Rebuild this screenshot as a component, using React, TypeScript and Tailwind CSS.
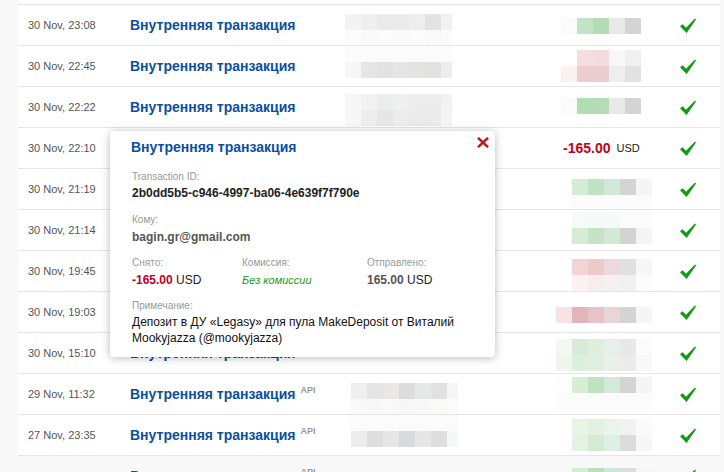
import React from 'react';

type Blur = { top: number; left: number; cells: string[][] };

interface Row {
  date: string;
  api?: boolean;
  addr?: Blur;
  addrText?: string;
  amount?: Blur;
  amountText?: string;
  last?: boolean;
}

const W = '#fbfbfb';

const rows: Row[] = [
  {
    date: '30 Nov, 23:08',
    addr: {
      top: 9,
      left: 0,
      cells: [
        ['#f3f3f3', '#efefee', '#e9eaea', '#ebebeb', '#efeeed', '#e3e3e3', '#f0f1f3'],
        ['#fcfcfc', '#fafafa', '#fbfbfb', '#fafafa', '#fbfbfb', '#f9f9f9', '#fbfbfb'],
      ],
    },
    amount: { top: 13, left: 5, cells: [['#fbfcfa', '#c4e3c4', '#b4dcb4', '#e8e9e8', '#d4d4d4']] },
  },
  {
    date: '30 Nov, 22:45',
    addr: {
      top: 0,
      left: 0,
      cells: [
        [W, W, W, W, W, W, W],
        ['#f6f6f6', '#e6e6e5', '#e1e3e3', '#e6e6e6', '#e3e3e2', '#e1e1e0', '#ecedef'],
      ],
    },
    amount: {
      top: 4,
      left: 5,
      cells: [
        ['#ffffff', '#f3dfe0', '#f3dce0', '#f8f8f8', '#f0f0f0'],
        ['#fcf0f0', '#ebcdd2', '#ecced2', '#eeeeee', '#e0e1e0'],
      ],
    },
  },
  {
    date: '30 Nov, 22:22',
    addr: {
      top: 7,
      left: 0,
      cells: [
        ['#f7f7f7', '#f3f2f1', '#ebeced', '#eef0ef', '#ececec', '#ececec', '#f1f2f4'],
        ['#f7f7f7', '#ededed', '#e6e6e6', '#ececec', '#eaeaea', '#ebebeb', '#f4f4f4'],
      ],
    },
    amount: { top: 11, left: 5, cells: [['#fbfcf8', '#b2dcb2', '#b6dcb6', '#e8e9e8', '#d4d4d4']] },
  },
  { date: '30 Nov, 22:10', amountText: '-165.00' },
  {
    date: '30 Nov, 21:19',
    amount: {
      top: 10,
      left: 16,
      cells: [
        ['#d4ebd4', '#c2e3c2', '#d2e8d9', '#d4d4d4', '#f4f5f4'],
        [W, W, W, W, W],
      ],
    },
  },
  {
    date: '30 Nov, 21:14',
    amount: {
      top: 2,
      left: 16,
      cells: [
        ['#f7fbf7', '#f5faf5', '#f6faf6', W, W],
        ['#d7ecd7', '#c5e4c5', '#d4e8d8', '#d3d3d3', '#f4f5f4'],
      ],
    },
  },
  {
    date: '30 Nov, 19:45',
    amount: {
      top: 8,
      left: 16,
      cells: [
        ['#f2d3d8', '#eccaca', '#edd9dd', '#e0e0e0', '#f7f7f7'],
        ['#faf2f3', '#f7ecee', '#f6f0f1', '#f0f0f0', W],
      ],
    },
  },
  {
    date: '30 Nov, 19:03',
    amount: {
      top: 15,
      left: 0,
      cells: [['#f6e4e4', '#e4b4bb', '#e8c2c6', '#e7d5d8', '#d4d4d4', '#f4f5f4']],
    },
  },
  {
    date: '30 Nov, 15:10',
    addrText: '31010101002',
    amount: {
      top: 6,
      left: 0,
      cells: [
        ['#f3f8f3', '#d8ebd8', '#deefde', '#e6f0ea', '#e8e8e8', W],
        ['#eef6ee', '#ddefdd', '#e0f0e0', '#e8f0e8', '#ebebeb', '#f8f8f8'],
      ],
    },
  },
  {
    date: '29 Nov, 11:32',
    api: true,
    addr: {
      top: 9,
      left: 6,
      cells: [
        ['#efefef', '#e5e5e5', '#e9e8e6', '#dcdcdc', '#e6e8e8', '#e1e1df', '#f5f6f8'],
        ['#f9f9f9', '#f8f8f8', '#f9f9f9', '#f7f7f7', '#f8f8f8', '#f9f9f8', '#fbfbfb'],
      ],
    },
    amount: {
      top: 3,
      left: 0,
      cells: [
        ['#fdfdfd', '#d8ecd6', '#c1e2c1', '#d4e9db', '#d4d4d4', '#f4f5f4'],
        [W, W, W, W, W, W],
      ],
    },
  },
  {
    date: '27 Nov, 23:35',
    api: true,
    addr: {
      top: 0,
      left: 6,
      cells: [
        [W, W, W, W, W, W, W],
        ['#ececec', '#dedede', '#e7e6e4', '#d9dadc', '#e6e6e6', '#dfdedc', '#f6f7f9'],
      ],
    },
    amount: {
      top: 4,
      left: 16,
      cells: [
        ['#e8f4e8', '#e3f1e3', '#eaf5ea', '#f3f2f2', '#fafafa'],
        ['#e3f2e3', '#d2ebd2', '#deefe4', '#dcdcdc', '#f6f7f6'],
      ],
    },
  },
  {
    date: '',
    api: true,
    last: true,
    amount: { top: 12, left: 16, cells: [['#d4ebd4', '#b9dfb9', '#cfe7d6', '#dcdcdc', '#f4f5f4']] },
  },
];

const Blocks = ({ b, narrowLast }: { b: Blur; narrowLast?: boolean }) => (
  <div style={{ paddingTop: b.top, paddingLeft: b.left }}>
    {b.cells.map((r, i) => (
      <div key={i} className="flex h-[16px]">
        {r.map((c, j) => (
          <div
            key={j}
            className={narrowLast && j === r.length - 1 ? 'h-[16px] w-[11px]' : 'h-[16px] w-[16px]'}
            style={{ backgroundColor: c }}
          />
        ))}
      </div>
    ))}
  </div>
);

const Check = () => (
  <svg width="16" height="15" viewBox="0 0 16 15">
    <path d="M0 8.3 L2.6 6.3 L6 9.8 L15 0.4 L16 1.4 L6.6 15 Z" fill="#129a12" />
  </svg>
);

const Title = () => (
  <span className="text-[14px] font-bold leading-[16px] text-[#0b4f9e]">Внутренняя транзакция</span>
);

function TxRow({ row }: { row: Row }) {
  return (
    <div className={`flex h-[41px] shrink-0 border-t border-[#e6e6e6] ${row.last ? 'bg-[#f8f8f8]' : ''}`}>
      <div className="flex w-[112px] items-center pl-[10px] text-[11px] text-[#555]">{row.date}</div>
      <div className="flex w-[215px] items-center">
        <Title />
        {row.api && <sup className="ml-[5px] text-[9px] font-bold text-[#999]">API</sup>}
      </div>
      <div className="w-[211px]">
        {row.addr && <Blocks b={row.addr} narrowLast />}
        {row.addrText && (
          <div className="flex h-full items-center pl-[15px] text-[12px] text-[#555]">{row.addrText}</div>
        )}
      </div>
      <div className="w-[109px]">
        {row.amount && <Blocks b={row.amount} />}
        {row.amountText && (
          <div className="flex h-full items-center gap-[6px] pl-[7px]">
            <span className="text-[14px] font-bold text-[#c0001e]">{row.amountText}</span>
            <span className="text-[11px] text-[#222]">USD</span>
          </div>
        )}
      </div>
      <div className="flex items-center pl-[15px]">
        <Check />
      </div>
    </div>
  );
}

function Popup() {
  return (
    <div className="absolute left-[110px] top-[131px] h-[226px] w-[385px] rounded-[4px] bg-white shadow-[0_1px_9px_rgba(0,0,0,0.28)]">
      <button className="absolute right-[6px] top-[6px]">
        <svg width="12" height="11" viewBox="0 0 12 11">
          <path d="M1 0.8 L11 10.2 M11 0.8 L1 10.2" stroke="#c4121d" strokeWidth="2.4" />
        </svg>
      </button>
      <div className="pl-[21px] pt-[8px] text-[14px] leading-[16px]">
        <Title />
      </div>
      <div className="pl-[22px] pr-[16px]">
        <div className="mt-[16px] text-[10px] leading-[12px] text-[#999]">Transaction ID:</div>
        <div className="mt-[2px] text-[12px] font-bold leading-[16px] text-[#222]">
          2b0dd5b5-c946-4997-ba06-4e639f7f790e
        </div>
        <div className="mt-[13px] text-[10px] leading-[12px] text-[#999]">Кому:</div>
        <div className="mt-[3px] text-[12px] font-bold leading-[16px] text-[#555]">bagin.gr@gmail.com</div>
        <div className="mt-[12px] flex">
          <div className="w-[110px]">
            <div className="text-[10px] leading-[12px] text-[#999]">Снято:</div>
            <div className="mt-[3px] text-[12px] leading-[16px]">
              <span className="font-bold text-[#c0001e]">-165.00</span>{' '}
              <span className="text-[#222]">USD</span>
            </div>
          </div>
          <div className="w-[125px]">
            <div className="text-[10px] leading-[12px] text-[#999]">Комиссия:</div>
            <div className="mt-[3px] text-[11px] italic leading-[16px] text-[#1a9a1a]">Без комиссии</div>
          </div>
          <div>
            <div className="text-[10px] leading-[12px] text-[#999]">Отправлено:</div>
            <div className="mt-[3px] text-[12px] leading-[16px]">
              <span className="font-bold text-[#555]">165.00</span>{' '}
              <span className="text-[#222]">USD</span>
            </div>
          </div>
        </div>
        <div className="mt-[12px] text-[10px] leading-[12px] text-[#999]">Примечание:</div>
        <div className="mt-[2px] text-[12px] leading-[16px] text-[#111]">
          Депозит в ДУ «Legasy» для пула MakeDeposit от Виталий Mookyjazza (@mookyjazza)
        </div>
      </div>
    </div>
  );
}

export default function App() {
  return (
    <div className="relative h-[472px] w-[724px] overflow-hidden bg-[#f8f8f8] font-['Liberation_Sans',Arial,sans-serif]">
      <div className="ml-[18px] flex w-[702px] flex-col bg-white pt-[4px]">
        {rows.map((r, i) => (
          <TxRow key={i} row={r} />
        ))}
      </div>
      <Popup />
    </div>
  );
}
